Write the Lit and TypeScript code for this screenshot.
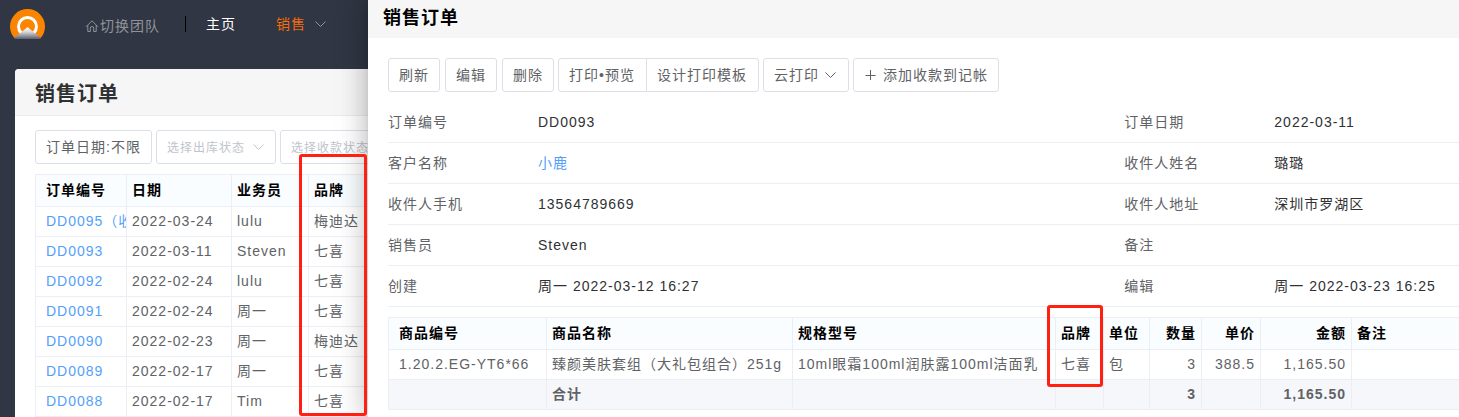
import { LitElement, html, css } from "lit";
import { customElement } from "lit/decorators.js";
import { classMap } from "lit/directives/class-map.js";

const chevron = html`<svg class="icon" viewBox="0 0 14 14" width="14" height="14" aria-hidden="true">
  <path d="M1.5 4.5 L6.5 9.5 L11.5 4.5" fill="none" stroke="currentColor" stroke-width="1" />
</svg>`;

const plus = html`<svg class="icon" viewBox="0 0 14 14" width="14" height="14" aria-hidden="true">
  <path d="M6.5 2 V12 M1.5 7.5 H11.5" fill="none" stroke="currentColor" stroke-width="1" />
</svg>`;

const home = html`<svg class="icon" viewBox="0 0 14 14" width="14" height="14" aria-hidden="true">
  <path
    d="M1 7.8 L7 1.8 L13 7.8 M2.8 6.2 V12.5 H5.3 V9.2 A1.7 1.7 0 0 1 8.7 9.2 V12.5 H11.2 V6.2"
    fill="none"
    stroke="currentColor"
    stroke-width="1"
  />
</svg>`;

const logo = html`<svg class="logo" viewBox="0 0 36 30" width="36" height="30" role="img" aria-label="logo">
  <defs>
    <linearGradient id="beam" x1="0" y1="0" x2="0" y2="1">
      <stop offset="0" stop-color="#ffffff" />
      <stop offset="0.4" stop-color="#d9dadd" />
      <stop offset="1" stop-color="#5c6069" />
    </linearGradient>
    <clipPath id="disc"><circle cx="17.5" cy="17.5" r="17.5" /></clipPath>
  </defs>
  <circle cx="17.5" cy="17.5" r="17.5" fill="#fb8500" />
  <circle cx="17.5" cy="17.5" r="9" fill="none" stroke="#fff" stroke-width="3" />
  <path d="M17.5 18 L21 21 L32.5 30 H2.5 L14 21 Z" fill="url(#beam)" clip-path="url(#disc)" />
</svg>`;

const base = css`
  * {
    box-sizing: border-box;
  }
  a {
    color: #559ffb;
    text-decoration: none;
  }
  button,
  select {
    margin: 0;
    font: inherit;
    letter-spacing: inherit;
    cursor: pointer;
  }
  h1,
  h2 {
    margin: 0;
    font-weight: 700;
  }
  .icon {
    display: block;
    flex: none;
  }
  .btn {
    display: flex;
    align-items: center;
    gap: 5px;
    height: 34px;
    padding: 0 10px;
    border: 1px solid #dcdfe6;
    border-radius: 3px;
    background: #fff;
    color: #606266;
    white-space: nowrap;
  }
  table {
    width: 100%;
    table-layout: fixed;
    border-collapse: separate;
    border-spacing: 0;
    border: 1px solid #ebeef5;
    border-width: 1px 0 0 1px;
  }
  th,
  td {
    height: 30px;
    padding: 0 5px 2px;
    overflow: hidden;
    border: 1px solid #ebeef5;
    border-width: 0 1px 1px 0;
    text-align: left;
    white-space: nowrap;
    line-height: 20px;
  }
  th {
    height: 32px;
    background: #f9fdff;
    color: #000;
  }
  th:first-child,
  td:first-child {
    padding-left: 10px;
  }
  th:last-child,
  td:last-child {
    border-right-width: 0;
  }
  .mark {
    position: absolute;
    z-index: 3;
    border: 3px solid #ff2012;
    border-radius: 3px;
    pointer-events: none;
  }
`;

const orders = [
  ["DD0095（收款）", "2022-03-24", "lulu", "梅迪达"],
  ["DD0093", "2022-03-11", "Steven", "七喜"],
  ["DD0092", "2022-02-24", "lulu", "七喜"],
  ["DD0091", "2022-02-24", "周一", "七喜"],
  ["DD0090", "2022-02-23", "周一", "梅迪达"],
  ["DD0089", "2022-02-17", "周一", "七喜"],
  ["DD0088", "2022-02-17", "Tim", "七喜"],
];

@customElement("order-list")
class OrderList extends LitElement {
  static styles = [
    base,
    css`
      :host {
        display: block;
      }
      .nav {
        display: flex;
        align-items: center;
        height: 48px;
        margin-bottom: 21px;
        padding-left: 10px;
        white-space: nowrap;
      }
      .logo {
        display: block;
        flex: none;
      }
      .team {
        display: flex;
        align-items: center;
        margin-left: 39px;
        padding-top: 4px;
        gap: 1px;
        color: #909399;
      }
      .divider {
        width: 1px;
        height: 16px;
        margin-left: 25px;
        background: #000;
      }
      .item {
        display: flex;
        align-items: center;
        gap: 8px;
        padding: 0 20px;
        color: #fff;
      }
      .active {
        color: #f56c0a;
      }
      .active .icon {
        color: #909399;
      }
      .card {
        margin-left: 15px;
        min-height: 348px;
        border-radius: 4px 0 0 0;
        background: #fff;
        overflow: hidden;
      }
      .head {
        height: 47px;
        padding: 2px 20px 0;
        border-bottom: 1px solid #ebebeb;
        background: #f6f6f6;
      }
      h1 {
        font-size: 20px;
        line-height: 46px;
        color: #303133;
      }
      .body {
        padding: 14px 0 0 20px;
      }
      .filters {
        display: flex;
        gap: 4px;
        margin-bottom: 10px;
      }
      .pick {
        display: grid;
        flex: none;
        align-items: center;
        width: 120px;
        color: #c0c4cc;
      }
      .pick > * {
        grid-area: 1 / 1;
      }
      .pick .icon {
        justify-self: end;
        margin-right: 10px;
        pointer-events: none;
      }
      select {
        width: 100%;
        height: 34px;
        padding: 2px 10px 0;
        appearance: none;
        border: 1px solid #dcdfe6;
        border-radius: 3px;
        background: #fff;
        color: #c0c4cc;
        font-size: 12px;
      }
      .c1 {
        width: 91px;
      }
      .c2 {
        width: 105px;
      }
      .c3 {
        width: 77px;
      }
    `,
  ];

  render() {
    return html`
      <nav class="nav">
        ${logo}
        <a class="team" href="#team">${home}<span>切换团队</span></a>
        <span class="divider"></span>
        <a class="item" href="#home">主页</a>
        <a class="item active" href="#sales">销售${chevron}</a>
        <a class="item" href="#purchase">采购</a>
      </nav>
      <main class="card">
        <header class="head"><h1>销售订单</h1></header>
        <div class="body">
          <div class="filters">
            <button class="btn" type="button">订单日期:不限</button>
            ${["选择出库状态", "选择收款状态"].map(
              (label) => html`<label class="pick">
                <select aria-label=${label}>
                  <option>${label}</option>
                </select>
                ${chevron}
              </label>`
            )}
          </div>
          <table>
            <colgroup>
              <col class="c1" />
              <col class="c2" />
              <col class="c3" />
              <col />
            </colgroup>
            <thead>
              <tr>
                ${["订单编号", "日期", "业务员", "品牌"].map((t) => html`<th>${t}</th>`)}
              </tr>
            </thead>
            <tbody>
              ${orders.map(
                ([no, date, seller, brand]) => html`<tr>
                  <td><a href="#order">${no}</a></td>
                  <td>${date}</td>
                  <td>${seller}</td>
                  <td>${brand}</td>
                </tr>`
              )}
            </tbody>
          </table>
        </div>
      </main>
    `;
  }
}

const fields: [string, string, boolean?][] = [
  ["订单编号", "DD0093"],
  ["订单日期", "2022-03-11"],
  ["客户名称", "小鹿", true],
  ["收件人姓名", "璐璐"],
  ["收件人手机", "13564789669"],
  ["收件人地址", "深圳市罗湖区"],
  ["销售员", "Steven"],
  ["备注", ""],
  ["创建", "周一 2022-03-12 16:27"],
  ["编辑", "周一 2022-03-23 16:25"],
];

const columns = [
  { name: "商品编号", value: "1.20.2.EG-YT6*66", total: "", key: "code" },
  { name: "商品名称", value: "臻颜美肤套组（大礼包组合）251g", total: "合计", key: "name" },
  { name: "规格型号", value: "10ml眼霜100ml润肤露100ml洁面乳", total: "", key: "spec" },
  { name: "品牌", value: "七喜", total: "", key: "brand" },
  { name: "单位", value: "包", total: "", key: "unit" },
  { name: "数量", value: "3", total: "3", key: "count", num: true },
  { name: "单价", value: "388.5", total: "", key: "price", num: true },
  { name: "金额", value: "1,165.50", total: "1,165.50", key: "amount", num: true },
  { name: "备注", value: "", total: "", key: "note" },
];

@customElement("order-detail")
class OrderDetail extends LitElement {
  static styles = [
    base,
    css`
      :host {
        display: block;
        background: #fff;
      }
      .head {
        height: 38px;
        padding: 0 15px;
        background: #f6f6f6;
      }
      h2 {
        font-size: 18px;
        line-height: 36px;
        color: #000;
      }
      .body {
        padding: 20px 0 0 20px;
      }
      .tools,
      .actions,
      .group {
        display: flex;
      }
      .tools {
        gap: 4px;
        margin-bottom: 10px;
      }
      .actions {
        gap: 5px;
      }
      .group .btn {
        padding-right: 11px;
      }
      .group .btn:first-child {
        border-radius: 3px 0 0 3px;
      }
      .group .btn:last-child {
        margin-left: -1px;
        border-radius: 0 3px 3px 0;
      }
      .fields {
        display: grid;
        grid-template-columns: 11fr 5fr;
        margin: 0 0 10px;
      }
      .field {
        display: flex;
        height: 41px;
        border-bottom: 1px solid #ebeef5;
        line-height: 40px;
        white-space: nowrap;
      }
      dt {
        flex: none;
        width: 150px;
      }
      dd {
        margin: 0;
        color: #303133;
      }
      .goods {
        position: relative;
      }
      .mark {
        top: -12px;
        left: 659px;
        width: 56px;
        height: 82px;
      }
      .total td {
        background: #f5f7fa;
        font-weight: 700;
      }
      .num {
        text-align: right;
      }
      .code {
        width: 158px;
      }
      .name {
        width: 246px;
      }
      .spec {
        width: 263px;
      }
      .brand {
        width: 48px;
      }
      .unit {
        width: 46px;
      }
      .count {
        width: 52px;
      }
      .price {
        width: 59px;
      }
      .amount {
        width: 91px;
      }
    `,
  ];

  render() {
    return html`
      <header class="head"><h2>销售订单</h2></header>
      <div class="body">
        <div class="tools">
          <div class="actions">
            ${["刷新", "编辑", "删除"].map((t) => html`<button class="btn" type="button">${t}</button>`)}
          </div>
          <div class="group">
            <button class="btn" type="button">打印•预览</button>
            <button class="btn" type="button">设计打印模板</button>
          </div>
          <button class="btn" type="button">云打印${chevron}</button>
          <button class="btn" type="button">${plus}添加收款到记帐</button>
        </div>
        <dl class="fields">
          ${fields.map(
            ([label, value, link]) => html`<div class="field">
              <dt>${label}</dt>
              <dd>${link ? html`<a href="#customer">${value}</a>` : value}</dd>
            </div>`
          )}
        </dl>
        <div class="goods">
          <table>
            <colgroup>
              ${columns.map((c) => html`<col class=${c.key} />`)}
            </colgroup>
            <thead>
              <tr>
                ${columns.map((c) => html`<th class=${classMap({ num: !!c.num })}>${c.name}</th>`)}
              </tr>
            </thead>
            <tbody>
              <tr>
                ${columns.map((c) => html`<td class=${classMap({ num: !!c.num })}>${c.value}</td>`)}
              </tr>
            </tbody>
            <tfoot>
              <tr class="total">
                ${columns.map((c) => html`<td class=${classMap({ num: !!c.num })}>${c.total}</td>`)}
              </tr>
            </tfoot>
          </table>
          <div class="mark"></div>
        </div>
      </div>
    `;
  }
}

@customElement("app-root")
class AppRoot extends LitElement {
  static styles = [
    base,
    css`
      :host {
        display: block;
        position: relative;
        min-height: 100vh;
        overflow: hidden;
        background: #303643;
        color: #606266;
        font-family: "Liberation Sans", "Noto Sans CJK SC", sans-serif;
        font-size: 14px;
        line-height: 20px;
        letter-spacing: 1px;
      }
      .drawer {
        position: absolute;
        z-index: 2;
        top: 0;
        right: 0;
        bottom: 0;
        left: 368px;
        box-shadow:
          0 0 10px -5px rgba(0, 0, 0, 0.2),
          0 0 24px 2px rgba(0, 0, 0, 0.14),
          0 0 30px 5px rgba(0, 0, 0, 0.12);
      }
      .mark {
        top: 154px;
        left: 299px;
        width: 68px;
        height: 262px;
      }
    `,
  ];

  render() {
    return html`
      <order-list></order-list>
      <order-detail class="drawer"></order-detail>
      <div class="mark"></div>
    `;
  }
}
